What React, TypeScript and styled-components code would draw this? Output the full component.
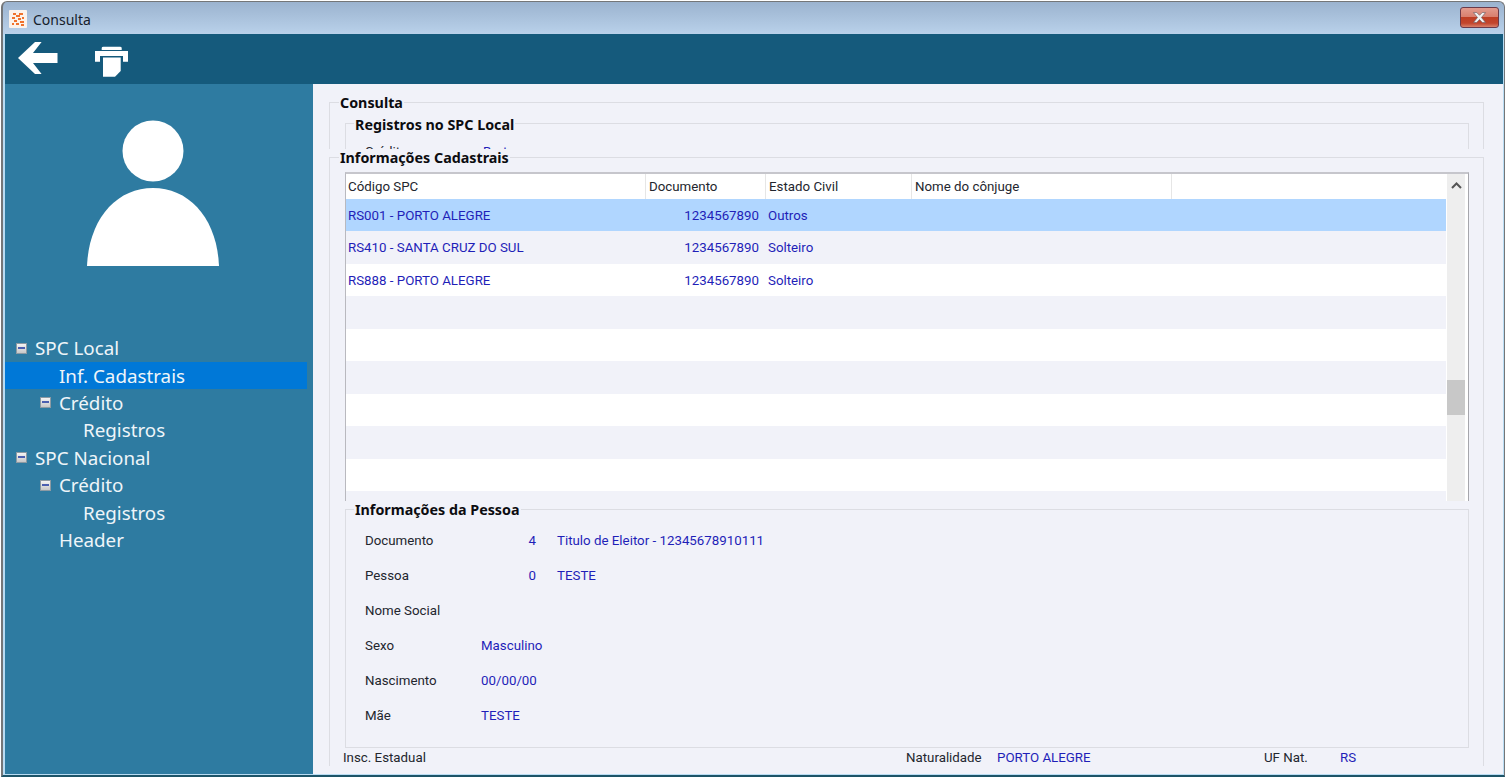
import React from "react";
import styled, { createGlobalStyle } from "styled-components";

const BODY_FONT = `Roboto, "Noto Sans", "Liberation Sans", sans-serif`;

const Global = createGlobalStyle`
  html, body { margin: 0; padding: 0; background: #fff; overflow: hidden; }
  body { font-family: "Noto Sans", "Open Sans", "Liberation Sans", sans-serif; }
  * { box-sizing: border-box; }
`;

const Window = styled.div`
  margin: 1px 0 0 1px;
  width: 1504px;
  height: 776px;
  display: flex;
  flex-direction: column;
  border: 1px solid #747678;
  border-left-width: 2px;
  border-bottom: 2px solid #1d5468;
  border-radius: 6px 6px 0 0;
  padding: 0 1px 1px 2px;
  background: linear-gradient(180deg, #9bb3cf 0, #b9d1ea 32px, #b8dcf3 33px);
`;

const TitleBar = styled.div`
  height: 32px;
  flex: none;
  display: flex;
  align-items: center;
  padding: 2px 4px 0 4px;
`;
const AppIcon = styled.svg`
  width: 18px;
  height: 18px;
  flex: none;
`;
const TitleText = styled.span`
  margin-left: 6px;
  font-size: 14px;
  color: #15202c;
  flex: 1;
`;
const CloseButton = styled.div`
  width: 39px;
  height: 21px;
  margin-top: -3px;
  border: 1px solid #6b3a4a;
  border-radius: 3px;
  display: flex;
  align-items: center;
  justify-content: center;
  background: linear-gradient(180deg, #e39b8e 0, #d9806f 45%, #bf3e24 50%, #c2452d 80%, #d8806a 100%);
`;

const Toolbar = styled.div`
  height: 50px;
  flex: none;
  background: #155a7c;
  display: flex;
  align-items: flex-start;
`;
const BackIcon = styled.svg`
  width: 42px;
  height: 34px;
  margin: 8px 0 0 12px;
  flex: none;
`;
const PrintIcon = styled.svg`
  width: 36px;
  height: 34px;
  margin: 11px 0 0 35px;
  flex: none;
`;

const Content = styled.div`
  flex: 1;
  min-height: 0;
  display: flex;
`;

const Sidebar = styled.aside`
  width: 308px;
  flex: none;
  background: #2e7ba1;
  display: flex;
  flex-direction: column;
`;
const Avatar = styled.svg`
  width: 136px;
  height: 150px;
  margin: 34px 0 0 80px;
  flex: none;
  filter: blur(0.7px);
`;
const Tree = styled.ul`
  list-style: none;
  margin: 66.5px 0 0;
  padding: 0;
  width: 302px;
`;
const TreeRow = styled.li<{ $level: number; $selected?: boolean }>`
  height: 27.4px;
  display: flex;
  align-items: center;
  padding-left: ${(p) => 30 + p.$level * 24}px;
  background: ${(p) => (p.$selected ? "#0078d7" : "transparent")};
  color: #eef5f9;
  font-size: 18.8px;
  white-space: nowrap;
  position: relative;
`;
const Toggle = styled.span`
  position: absolute;
  margin-left: -19px;
  width: 11px;
  height: 11px;
  background: linear-gradient(180deg, #f4f4f4, #c8c8c8);
  border: 1px solid #8d9aa3;
  &::after {
    content: "";
    position: absolute;
    left: 1px;
    right: 1px;
    top: 3px;
    height: 2px;
    background: #4b5fb0;
  }
`;

const Main = styled.main`
  flex: 1;
  min-width: 0;
  background: #f1f2f9;
  display: flex;
  flex-direction: column;
  font-family: ${BODY_FONT};
`;

const ClipArea = styled.div`
  height: 65px;
  flex: none;
  overflow: hidden;
  padding: 18px 19px 0 16px;
`;
const Group = styled.section`
  border: 1px solid #dcdde3;
`;
const OuterGroup = styled(Group)`
  height: 80px;
  padding: 0 14px 0 15px;
`;
const InnerGroup = styled(Group)`
  margin-top: 11px;
  height: 60px;
`;
const Legend = styled.div`
  width: fit-content;
  height: 18px;
  margin: -9px 0 0 8px;
  padding: 0 1px;
  line-height: 18px;
  background: #f1f2f9;
  font-family: "Noto Sans", "Liberation Sans", sans-serif;
  font-size: 14.3px;
  font-weight: 700;
  color: #0c0c10;
  white-space: nowrap;
`;
const TopLegend = styled(Legend)`
  margin-left: -6px;
`;
const InnerLegend = styled(Legend)`
  margin-top: -8px;
`;
const ClippedRow = styled.div`
  display: flex;
  padding-left: 19px;
  margin-top: 9px;
  font-size: 13.3px;
  line-height: 17px;
`;
const ClippedLabel = styled.span`
  width: 118px;
  color: #23262e;
`;
const ClippedValue = styled.span`
  color: #1f1fb8;
`;

const CadastroGroup = styled.section`
  margin: 8px 19px 0 16px;
  border-top: 1px solid #dcdde3;
  border-left: 1px solid #dcdde3;
  border-right: 1px solid #dcdde3;
  padding: 0 14px 0 15px;
  height: 609px;
`;

const TableFrame = styled.div`
  margin-top: 5px;
  height: 329px;
  display: flex;
  border-top: 2px solid #c6c6cc;
  border-left: 1px solid #b9b9bf;
  border-right: 1px solid #a6a6ac;
  background: #fff;
  overflow: hidden;
`;
const TableBody = styled.div`
  width: 1100px;
  flex: none;
`;
const HeaderRow = styled.div`
  display: flex;
  height: 25px;
  background: #fff;
`;
const HeaderCell = styled.div<{ $w: number; $inset?: number }>`
  width: ${(p) => p.$w}px;
  flex: none;
  padding-left: ${(p) => p.$inset ?? 3}px;
  border-right: 1px solid #e6e6e6;
  font-size: 13.3px;
  line-height: 25px;
  color: #23262e;
  white-space: nowrap;
`;
const HeaderFill = styled.div`
  flex: 1;
`;
const Row = styled.div<{ $bg: string }>`
  display: flex;
  height: 32.45px;
  background: ${(p) => p.$bg};
`;
const Cell = styled.div<{ $w: number; $right?: boolean }>`
  width: ${(p) => p.$w}px;
  flex: none;
  padding: ${(p) => (p.$right ? "0 7px 0 0" : "0 0 0 2px")};
  text-align: ${(p) => (p.$right ? "right" : "left")};
  font-size: 13.3px;
  line-height: 33px;
  color: #1f1fb8;
  white-space: nowrap;
`;
const ScrollBar = styled.div`
  width: 18px;
  margin-left: 1px;
  flex: none;
  background: #eeeeee;
  position: relative;
  display: flex;
  justify-content: center;
  padding-top: 6px;
`;
const ScrollUp = styled.svg`
  width: 11px;
  height: 7px;
  margin-top: 2px;
`;
const ScrollThumb = styled.div`
  position: absolute;
  left: 0;
  top: 206px;
  width: 18px;
  height: 35px;
  background: #c8c8c8;
`;

const PersonGroup = styled(Group)`
  margin-top: 8px;
  height: 239px;
`;
const PersonRows = styled.div`
  padding: 3.5px 0 0 19px;
`;
const PersonRow = styled.div`
  display: flex;
  height: 35px;
  align-items: center;
  font-size: 13.3px;
`;
const Label = styled.span<{ $w?: number }>`
  width: ${(p) => p.$w ?? 116}px;
  flex: none;
  color: #23262e;
  white-space: nowrap;
`;
const Code = styled.span`
  width: 55px;
  flex: none;
  text-align: right;
  color: #1f1fb8;
`;
const Value = styled.span<{ $gap?: number; $w?: number }>`
  margin-left: ${(p) => p.$gap ?? 0}px;
  width: ${(p) => (p.$w ? p.$w + "px" : "auto")};
  flex: none;
  color: #1f1fb8;
  white-space: nowrap;
`;
const FooterRow = styled.div`
  display: flex;
  height: 18px;
  margin: 0 0 0 -2px;
  align-items: center;
  font-size: 13.3px;
`;

const columns = [300, 120, 146, 260];
const rows = [
  { a: "RS001 - PORTO ALEGRE", b: "1234567890", c: "Outros" },
  { a: "RS410 - SANTA CRUZ DO SUL", b: "1234567890", c: "Solteiro" },
  { a: "RS888 - PORTO ALEGRE", b: "1234567890", c: "Solteiro" },
  {}, {}, {}, {}, {}, {}, {},
] as { a?: string; b?: string; c?: string }[];

const rowBg = (i: number) => (i === 0 ? "#b0d6ff" : i % 2 === 1 ? "#f1f2f9" : "#ffffff");

const tree: { label: string; level: number; toggle?: boolean; selected?: boolean }[] = [
  { label: "SPC Local", level: 0, toggle: true },
  { label: "Inf. Cadastrais", level: 1, selected: true },
  { label: "Crédito", level: 1, toggle: true },
  { label: "Registros", level: 2 },
  { label: "SPC Nacional", level: 0, toggle: true },
  { label: "Crédito", level: 1, toggle: true },
  { label: "Registros", level: 2 },
  { label: "Header", level: 1 },
];

export default function App() {
  return (
    <>
      <Global />
      <Window>
        <TitleBar>
          <AppIcon viewBox="0 0 18 18">
            <rect width="18" height="18" rx="1" fill="#fbf3ec" />
            <g fill="#f0722c">
              <rect x="4" y="3" width="3" height="2" />
              <rect x="10" y="3" width="4" height="2" />
              <rect x="7" y="5" width="4" height="2" />
              <rect x="3" y="7" width="3" height="2" />
              <rect x="9" y="8" width="3" height="2" />
              <rect x="13" y="7" width="2" height="2" />
              <rect x="5" y="10" width="3" height="2" />
              <rect x="11" y="11" width="4" height="2" />
              <rect x="3" y="13" width="2" height="2" />
              <rect x="7" y="13" width="3" height="2" />
              <rect x="12" y="14" width="3" height="2" />
            </g>
          </AppIcon>
          <TitleText>Consulta</TitleText>
          <CloseButton>
            <svg width="15" height="11" viewBox="1.5 0.5 12 10">
              <path d="M2 1h3l2.5 2.5L10 1h3L9.3 5.5 13 10h-3L7.5 7.3 5 10H2l3.7-4.5z" fill="#f2f2f2" stroke="#6d5a60" strokeWidth="0.6" />
            </svg>
          </CloseButton>
        </TitleBar>
        <Toolbar>
          <BackIcon viewBox="0 0 42 34">
            <path d="M1 16L18 0H24.6L16 11H40.5V21H16L24.6 32H18Z" fill="#fff" />
          </BackIcon>
          <PrintIcon viewBox="0 0 36 34">
            <path d="M7.7 3Q7.7 1.7 9.5 1.7H26Q27.7 1.7 27.7 3V5H7.7Z" fill="#fff" />
            <path d="M1 6H34V16.7H29V11H6V16.7H1Z" fill="#fff" />
            <path d="M9 12.5H26.7V26L21 31.7H9Z" fill="#fff" />
          </PrintIcon>
        </Toolbar>
        <Content>
          <Sidebar>
            <Avatar viewBox="0 0 136 150">
              <circle cx="68" cy="33" r="30.5" fill="#fff" />
              <path d="M2 148C4 100 32 70 68 70S132 100 134 148Z" fill="#fff" />
            </Avatar>
            <Tree>
              {tree.map((t, i) => (
                <TreeRow key={i} $level={t.level} $selected={t.selected}>
                  {t.toggle && <Toggle />}
                  {t.label}
                </TreeRow>
              ))}
            </Tree>
          </Sidebar>
          <Main>
            <ClipArea>
              <OuterGroup>
                <TopLegend>Consulta</TopLegend>
                <InnerGroup>
                  <InnerLegend>Registros no SPC Local</InnerLegend>
                  <ClippedRow>
                    <ClippedLabel>Crédito</ClippedLabel>
                    <ClippedValue>Bruto</ClippedValue>
                  </ClippedRow>
                </InnerGroup>
              </OuterGroup>
            </ClipArea>
            <CadastroGroup>
              <TopLegend>Informações Cadastrais</TopLegend>
              <TableFrame>
                <TableBody>
                  <HeaderRow>
                    <HeaderCell $w={columns[0]} $inset={2}>Código SPC</HeaderCell>
                    <HeaderCell $w={columns[1]}>Documento</HeaderCell>
                    <HeaderCell $w={columns[2]}>Estado Civil</HeaderCell>
                    <HeaderCell $w={columns[3]}>Nome do cônjuge</HeaderCell>
                    <HeaderFill />
                  </HeaderRow>
                  {rows.map((r, i) => (
                    <Row key={i} $bg={rowBg(i)}>
                      <Cell $w={columns[0]}>{r.a}</Cell>
                      <Cell $w={columns[1]} $right>{r.b}</Cell>
                      <Cell $w={columns[2]}>{r.c}</Cell>
                    </Row>
                  ))}
                </TableBody>
                <ScrollBar>
                  <ScrollUp viewBox="0 0 11 7">
                    <path d="M1 6L5.5 1.5L10 6" fill="none" stroke="#555" strokeWidth="2" />
                  </ScrollUp>
                  <ScrollThumb />
                </ScrollBar>
              </TableFrame>
              <PersonGroup>
                <Legend>Informações da Pessoa</Legend>
                <PersonRows>
                  <PersonRow>
                    <Label>Documento</Label>
                    <Code>4</Code>
                    <Value $gap={21}>Titulo de Eleitor - 12345678910111</Value>
                  </PersonRow>
                  <PersonRow>
                    <Label>Pessoa</Label>
                    <Code>0</Code>
                    <Value $gap={21}>TESTE</Value>
                  </PersonRow>
                  <PersonRow>
                    <Label>Nome Social</Label>
                  </PersonRow>
                  <PersonRow>
                    <Label>Sexo</Label>
                    <Value>Masculino</Value>
                  </PersonRow>
                  <PersonRow>
                    <Label>Nascimento</Label>
                    <Value>00/00/00</Value>
                  </PersonRow>
                  <PersonRow>
                    <Label>Mãe</Label>
                    <Value>TESTE</Value>
                  </PersonRow>
                </PersonRows>
              </PersonGroup>
              <FooterRow>
                <Label $w={563}>Insc. Estadual</Label>
                <Label $w={91}>Naturalidade</Label>
                <Value $w={267}>PORTO ALEGRE</Value>
                <Label $w={76}>UF Nat.</Label>
                <Value>RS</Value>
              </FooterRow>
            </CadastroGroup>
          </Main>
        </Content>
      </Window>
    </>
  );
}
